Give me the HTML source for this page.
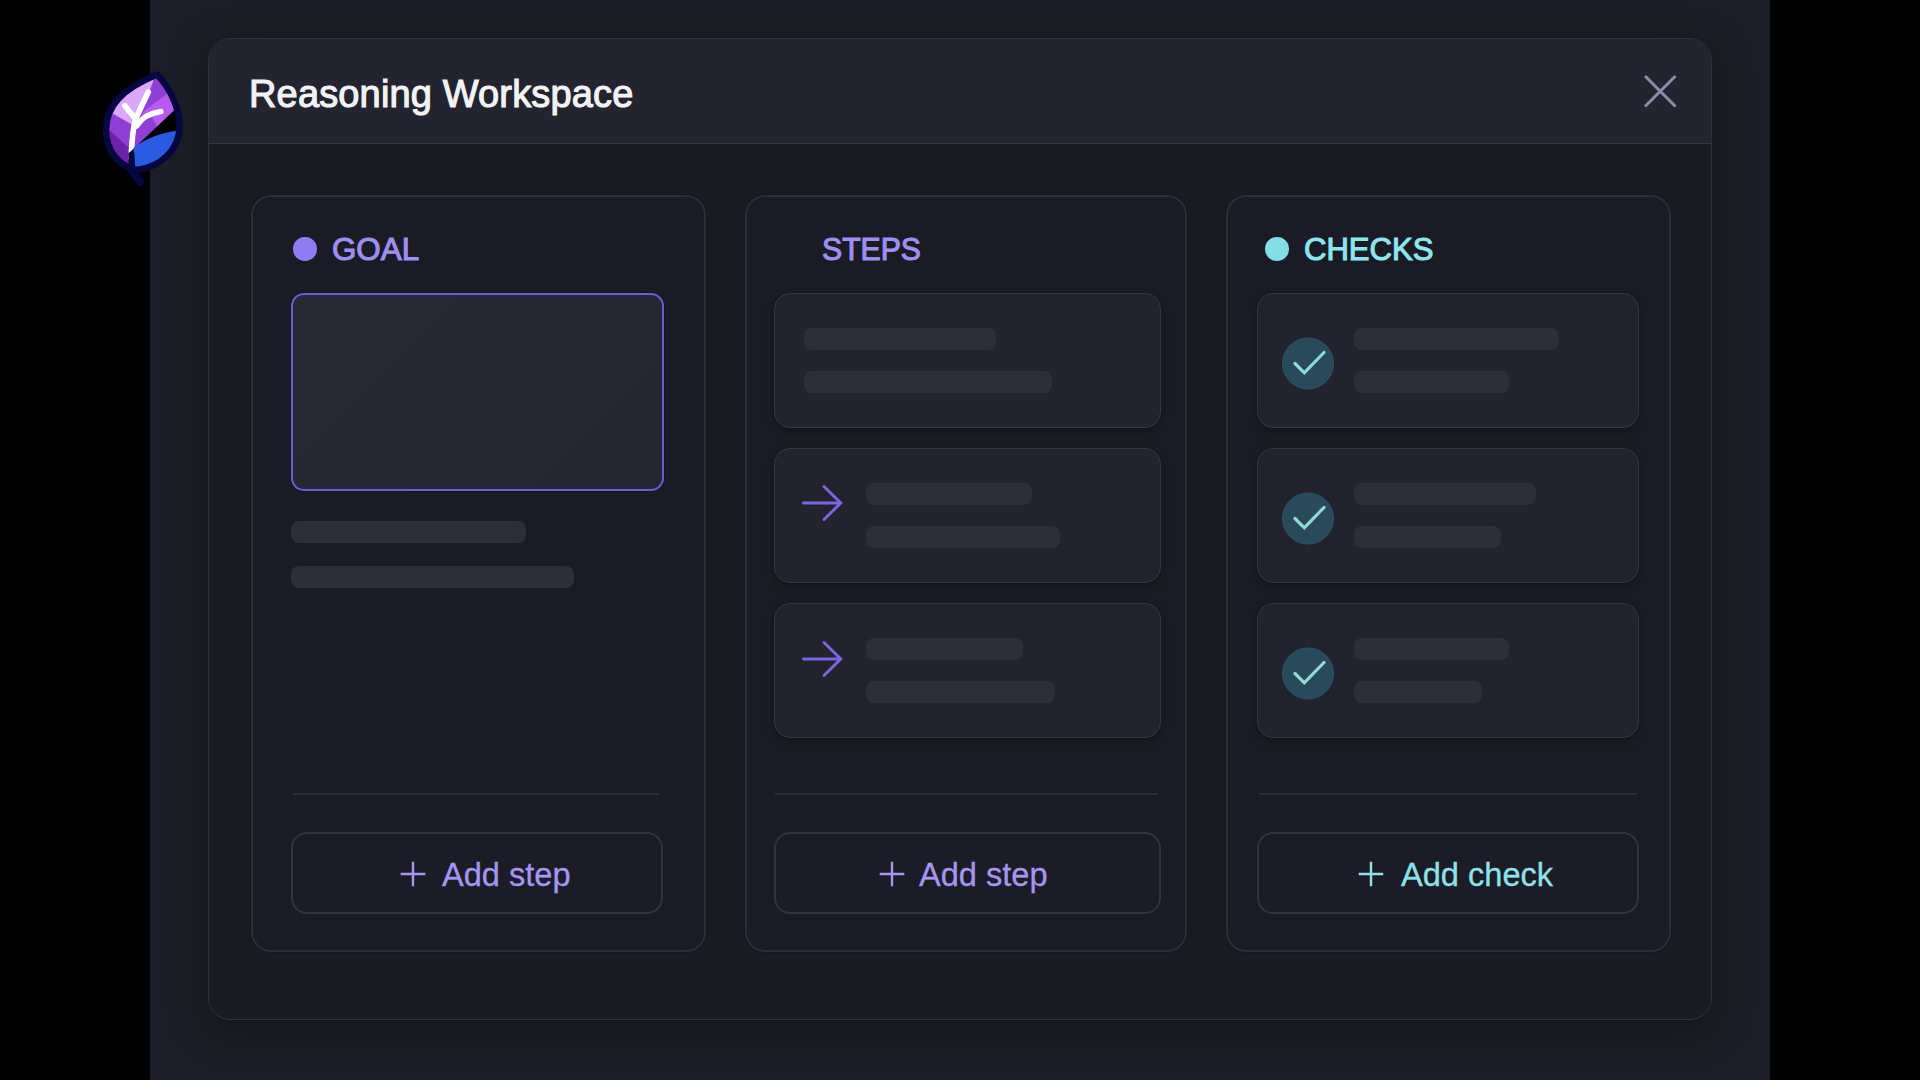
<!DOCTYPE html>
<html><head><meta charset="utf-8">
<style>
*{box-sizing:border-box;margin:0;padding:0}
html,body{width:1920px;height:1080px;overflow:hidden;background:#000;font-family:"Liberation Sans",sans-serif}
.abs{position:absolute}
#panel{left:150px;top:0;width:1620px;height:1080px;background:#1d1d27}
#modal{left:208px;top:38px;width:1504px;height:982px;border-radius:22px;background:#1a1a23;border:1.5px solid #2f303b;overflow:hidden;box-shadow:0 10px 40px rgba(0,0,0,.35)}
#hdr{left:0;top:0;width:100%;height:105px;background:#23242f;border-bottom:1.5px solid #353641}
#title{font-size:38px;line-height:44px;color:#f3f3f6;-webkit-text-stroke:1.1px #f3f3f6;letter-spacing:0.15px;white-space:nowrap}
.card{top:194.5px;height:757px;border-radius:20px;border:2px solid #2b2d38;background:#1a1b24;box-shadow:0 0 0 1px rgba(0,0,0,.18)}
.hd{top:230.8px;font-size:32px;line-height:36px;white-space:nowrap;-webkit-text-stroke:1.1px currentColor;letter-spacing:0;transform:scaleX(0.979);transform-origin:0 0}
.dot{width:23.5px;height:23.5px;border-radius:50%}
.item{left:774px;width:387px;height:135px;border-radius:16px;background:#22232e;border:1.6px solid #353641;box-shadow:0 3px 10px rgba(0,0,0,.3)}
.bar{height:22px;border-radius:8px;background:#2d2e3a}
.div{top:793px;height:2px;background:#2c2d37}
.btn{top:832px;height:82px;border-radius:16px;border:2px solid #32333e;background:#1b1c25}
.btxt{top:855.5px;font-size:32.6px;line-height:38px;white-space:nowrap;-webkit-text-stroke:0.3px currentColor}
</style></head>
<body>
<div id="panel" class="abs"></div>

<!-- logo -->
<svg class="abs" style="left:90px;top:60px" width="110" height="135" viewBox="90 60 110 135">
  <defs><clipPath id="lf"><path d="M157,74.5 C169,87 179.5,106 179.5,127 C179.5,150 160,167 137,170 C118,166 106,150 106,130 C106,106 122,89 157,74.5 Z"/></clipPath></defs>
  <line x1="131" y1="169" x2="140.2" y2="181.5" stroke="#060641" stroke-width="8.5" stroke-linecap="round"/>
  <g clip-path="url(#lf)">
    <rect x="90" y="60" width="110" height="135" fill="#8f3fd6"/>
    <polygon points="157,70 150,90 141,114 132,124.5 112.5,113.5 96,104 120,60" fill="#dba7fb"/>
    <polygon points="192,75 143.6,111.6 141,118 152,117 158,128 192,95" fill="#b85cf0"/>
    <polygon points="95,117 128.5,147.5 128.5,195 95,195" fill="#6b22a8"/>
    <path d="M131.2,158 Q132,132 135.5,119 M135.5,119 L148.3,92 M135.5,119 L124.8,105.8 M136.5,126 Q144,114 160.8,111.6" stroke="#fff" stroke-width="5.6" stroke-linecap="round" fill="none"/>
    <polygon points="194,91.5 128.5,153.5 128.5,200 194,200" fill="#000"/>
    <path d="M133.5,148 Q152,133 185,129.5 L195,195 L133.5,195 Z" fill="#2a5be0"/>
    <line x1="131.5" y1="152.5" x2="132.8" y2="175" stroke="#060641" stroke-width="5.6"/>
  </g>
  <path d="M157,74.5 C169,87 179.5,106 179.5,127 C179.5,150 160,167 137,170 C118,166 106,150 106,130 C106,106 122,89 157,74.5 Z" fill="none" stroke="#060641" stroke-width="6.5" stroke-linejoin="round"/>
</svg>

<div id="modal" class="abs">
  <div id="hdr" class="abs"></div>
</div>
<div id="title" class="abs" style="left:249px;top:72px">Reasoning Workspace</div>
<svg class="abs" style="left:1640px;top:71px" width="40" height="40" viewBox="1640 71 40 40">
  <path d="M1645,76 L1675.5,106.5 M1675.5,76 L1645,106.5" stroke="#8b8cae" stroke-width="3"/>
</svg>

<!-- cards -->
<div class="abs card" style="left:251px;width:455px"></div>
<div class="abs card" style="left:745px;width:441.5px"></div>
<div class="abs card" style="left:1225.5px;width:445px"></div>

<!-- GOAL -->
<div class="abs dot" style="left:293px;top:237px;background:#8f7cf0"></div>
<div class="abs hd" style="left:332px;color:#9f8ff3">GOAL</div>
<div class="abs" style="left:291px;top:293px;width:373px;height:198px;border-radius:13px;background:linear-gradient(135deg,#282935,#242531);border:2px solid #6c5cd3;box-shadow:0 0 0 1px rgba(0,0,0,.3)"></div>
<div class="abs bar" style="left:291px;top:521px;width:235px"></div>
<div class="abs bar" style="left:291px;top:566px;width:283px"></div>

<!-- STEPS -->
<div class="abs hd" style="left:822px;color:#9f8ff3;transform:scaleX(0.943)">STEPS</div>
<div class="abs item" style="top:293px"></div>
<div class="abs bar" style="left:804px;top:328px;width:192px"></div>
<div class="abs bar" style="left:804px;top:371px;width:248px"></div>
<div class="abs item" style="top:448px"></div>
<div class="abs bar" style="left:866px;top:483px;width:166px"></div>
<div class="abs bar" style="left:866px;top:526px;width:194px"></div>
<div class="abs item" style="top:603px"></div>
<div class="abs bar" style="left:866px;top:638px;width:157px"></div>
<div class="abs bar" style="left:866px;top:681px;width:189px"></div>

<!-- CHECKS -->
<div class="abs dot" style="left:1265px;top:237px;background:#82dde6"></div>
<div class="abs hd" style="left:1304px;color:#8de5ee;transform:scaleX(0.970)">CHECKS</div>
<div class="abs item" style="left:1257px;top:293px;width:382px"></div>
<div class="abs bar" style="left:1354px;top:328px;width:205px"></div>
<div class="abs bar" style="left:1354px;top:371px;width:155px"></div>
<div class="abs item" style="left:1257px;top:448px;width:382px"></div>
<div class="abs bar" style="left:1354px;top:483px;width:182px"></div>
<div class="abs bar" style="left:1354px;top:526px;width:147px"></div>
<div class="abs item" style="left:1257px;top:603px;width:382px"></div>
<div class="abs bar" style="left:1354px;top:638px;width:155px"></div>
<div class="abs bar" style="left:1354px;top:681px;width:128px"></div>

<!-- dividers -->
<div class="abs div" style="left:293px;width:366px"></div>
<div class="abs div" style="left:775px;width:383px"></div>
<div class="abs div" style="left:1259px;width:378px"></div>

<!-- buttons -->
<div class="abs btn" style="left:291px;width:372px"></div>
<div class="abs btn" style="left:774px;width:387px"></div>
<div class="abs btn" style="left:1257px;width:382px"></div>
<div class="abs btxt" style="left:442px;color:#a596f4">Add step</div>
<div class="abs btxt" style="left:919px;color:#a596f4">Add step</div>
<div class="abs btxt" style="left:1401px;color:#8fe2ea">Add check</div>

<!-- arrows -->
<svg class="abs" style="left:796px;top:480px" width="52" height="46" viewBox="796 480 52 46">
  <path d="M803.5,503 H840 M824,486.5 L840.8,503 L824,519.5" stroke="#7a66e2" stroke-width="2.9" stroke-linecap="round" stroke-linejoin="miter" fill="none"/>
</svg>
<svg class="abs" style="left:796px;top:635.8px" width="52" height="46" viewBox="796 480 52 46">
  <path d="M803.5,503 H840 M824,486.5 L840.8,503 L824,519.5" stroke="#7a66e2" stroke-width="2.9" stroke-linecap="round" stroke-linejoin="miter" fill="none"/>
</svg>
<!-- checks -->
<svg class="abs" style="left:1278px;top:333px" width="60" height="60" viewBox="1278 333 60 60">
  <circle cx="1308" cy="363.5" r="25.5" fill="#294a5b" stroke="#2d5566" stroke-width="1"/>
  <path d="M1295,363.5 L1304.3,372.8 L1324,352.5" stroke="#93d9d8" stroke-width="3.2" stroke-linecap="round" stroke-linejoin="miter" fill="none"/>
</svg>
<svg class="abs" style="left:1278px;top:488px" width="60" height="60" viewBox="1278 333 60 60">
  <circle cx="1308" cy="363.5" r="25.5" fill="#294a5b" stroke="#2d5566" stroke-width="1"/>
  <path d="M1295,363.5 L1304.3,372.8 L1324,352.5" stroke="#93d9d8" stroke-width="3.2" stroke-linecap="round" stroke-linejoin="miter" fill="none"/>
</svg>
<svg class="abs" style="left:1278px;top:643px" width="60" height="60" viewBox="1278 333 60 60">
  <circle cx="1308" cy="363.5" r="25.5" fill="#294a5b" stroke="#2d5566" stroke-width="1"/>
  <path d="M1295,363.5 L1304.3,372.8 L1324,352.5" stroke="#93d9d8" stroke-width="3.2" stroke-linecap="round" stroke-linejoin="miter" fill="none"/>
</svg>
<!-- plus -->
<svg class="abs" style="left:395px;top:856px" width="36" height="36" viewBox="0 0 36 36">
  <path d="M18,5.7 V30.3 M5.7,18 H30.3" stroke="#a596f4" stroke-width="2.4"/>
</svg>
<svg class="abs" style="left:873.5px;top:856px" width="36" height="36" viewBox="0 0 36 36">
  <path d="M18,5.7 V30.3 M5.7,18 H30.3" stroke="#a596f4" stroke-width="2.4"/>
</svg>
<svg class="abs" style="left:1352.5px;top:856px" width="36" height="36" viewBox="0 0 36 36">
  <path d="M18,5.7 V30.3 M5.7,18 H30.3" stroke="#8fe2ea" stroke-width="2.4"/>
</svg>
</body></html>
